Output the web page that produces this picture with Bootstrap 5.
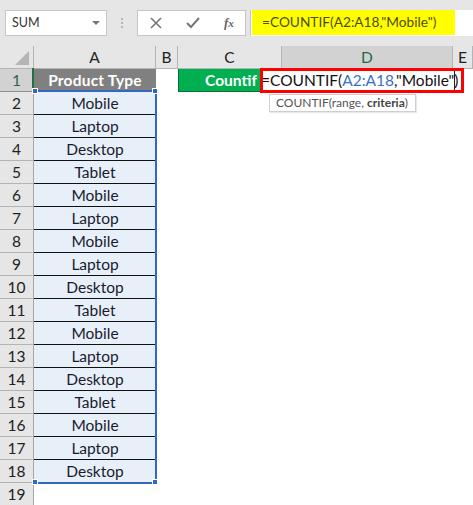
<!DOCTYPE html>
<html lang="en">
<head>
<meta charset="utf-8">
<title>COUNTIF</title>
<link href="https://cdn.jsdelivr.net/npm/bootstrap@5.3.0/dist/css/bootstrap.min.css" rel="stylesheet">
<style>
html,body{margin:0;height:505px;overflow:hidden;background:#fff;}
body{font-family:Lato,"Liberation Sans",sans-serif;color:#1a1a1a;}
.shell{width:473px;height:505px;position:relative;overflow:hidden;}
.fbar{height:46px;background:#e6e6e6;padding:10px 0 10px 5px;}
.namebox{width:102px;height:26px;background:#fff;border:1px solid #c6c6c6;padding:0 6px;font-size:12.5px;color:#333;}
.caret{width:0;height:0;border-left:4px solid transparent;border-right:4px solid transparent;border-top:4px solid #777;}
.gripper{width:20px;gap:2px;margin:0 5px;}
.gripper span{display:block;width:2px;height:2px;background:#b5b5b5;}
.fnbtns{width:109px;height:26px;background:#fff;border:1px solid #c6c6c6;margin-right:4px;flex:none;padding:0 11px 0 12px;}
.fnbtns svg{display:block;}
.fx{font-family:"Liberation Serif",serif;font-style:italic;font-weight:700;font-size:13px;color:#666;}
.fbox{flex:1;height:26px;background:#fff;padding-left:1px;border-left:1px solid #c6c6c6;}
.fhl{width:203px;height:25px;background:#ffff00;font-size:13.7px;color:#4d4d00;padding-left:10px;line-height:24px;white-space:nowrap;}
.sheet{display:grid;grid-template-columns:34px 122px 22px 82px 22px 171px 20px;grid-auto-rows:23px;}
.hd{background:#e6e6e6;border-right:1px solid #b4b4b4;border-bottom:1px solid #b4b4b4;font-size:15.5px;text-align:center;line-height:23px;color:#222;}
.hd.on{background:#d2d2d2;color:#1f6b47;border-bottom-color:#8f8f8f;}
.spanc{grid-column:span 2;}
.rowhd{grid-column:1;border-right:1px solid #a6a6a6;}
.corner{position:relative;}
.corner i{position:absolute;right:4px;bottom:3px;width:0;height:0;border-left:14px solid transparent;border-bottom:14px solid #b5b5b5;}
.dat{background:#e7eff9;border-bottom:1px solid #111;text-align:center;font-size:15.5px;line-height:22px;color:#1a1a2e;}
.dat.lastdat{border-bottom:0;}
.ph{background:#808080;color:#fff;font-weight:700;font-size:15.5px;text-align:center;line-height:22px;letter-spacing:.2px;}
.grn{grid-column:4;background:#00b050;color:#fff;font-weight:700;font-size:15.5px;line-height:22px;text-align:right;overflow:hidden;border-left:1px solid #0c6b35;border-bottom:1px solid #0c6b35;padding-right:3px;white-space:nowrap;}
.frm{grid-column:5 / span 3;font-size:15.5px;line-height:23px;padding-left:1px;white-space:nowrap;color:#111;}
.rf{color:#3a70c4;}
.sel{position:absolute;left:34px;top:90px;width:123px;height:394px;border:2px solid #3268c4;border-left:0;pointer-events:none;}
.hnd{position:absolute;width:4px;height:4px;background:#3268c4;border:1px solid #fff;box-sizing:content-box;}
.hnd.tr{left:152px;top:88px;}
.hnd.br{left:152px;top:479px;}
.hnd.tl{left:32px;top:88px;}
.hnd.bl{left:32px;top:479px;}
.redbox{position:absolute;left:260px;top:68px;width:204px;height:25px;border:3px solid #f00;pointer-events:none;}
.edge{position:absolute;left:454px;top:71px;width:1px;height:22px;background:#222;}
.tip{position:absolute;left:269px;top:94px;width:147px;height:18px;background:#fff;border:1px solid #cfcfcf;box-shadow:1px 1px 1px #e8e8e8;font-size:12px;line-height:16px;padding-left:6px;color:#555;white-space:nowrap;}
.tip b{color:#444;}
.activebar{position:absolute;left:32px;top:68px;width:2px;height:23px;background:#1f7246;}
</style>
</head>
<body>
<div class="shell">
  <div class="fbar d-flex align-items-center">
    <div class="namebox d-flex align-items-center justify-content-between flex-shrink-0"><span>SUM</span><span class="caret"></span></div>
    <div class="gripper d-flex flex-column align-items-center flex-shrink-0"><span></span><span></span><span></span></div>
    <div class="fnbtns d-flex align-items-center justify-content-between">
      <svg width="12" height="12" viewBox="0 0 12 12"><path d="M1 1l10 10M11 1L1 11" stroke="#777" stroke-width="1.6" fill="none"/></svg>
      <svg width="14" height="12" viewBox="0 0 14 12"><path d="M1 6l4 4 8-9" stroke="#777" stroke-width="2" fill="none"/></svg>
      <span class="fx">f<small>x</small></span>
    </div>
    <div class="fbox d-flex"><div class="fhl">=COUNTIF(A2:A18,"Mobile")</div></div>
  </div>
  <div class="sheet">
    <div class="hd corner"><i></i></div><div class="hd">A</div><div class="hd">B</div><div class="hd spanc">C</div><div class="hd on">D</div><div class="hd">E</div>
    <div class="hd on rowhd">1</div><div class="ph">Product Type</div><div class="grn">Countif</div><div class="frm">=COUNTIF(<span class="rf">A2:A18</span>,"Mobile")</div>
    <div class="hd rowhd">2</div><div class="dat">Mobile</div>
    <div class="hd rowhd">3</div><div class="dat">Laptop</div>
    <div class="hd rowhd">4</div><div class="dat">Desktop</div>
    <div class="hd rowhd">5</div><div class="dat">Tablet</div>
    <div class="hd rowhd">6</div><div class="dat">Mobile</div>
    <div class="hd rowhd">7</div><div class="dat">Laptop</div>
    <div class="hd rowhd">8</div><div class="dat">Mobile</div>
    <div class="hd rowhd">9</div><div class="dat">Laptop</div>
    <div class="hd rowhd">10</div><div class="dat">Desktop</div>
    <div class="hd rowhd">11</div><div class="dat">Tablet</div>
    <div class="hd rowhd">12</div><div class="dat">Mobile</div>
    <div class="hd rowhd">13</div><div class="dat">Laptop</div>
    <div class="hd rowhd">14</div><div class="dat">Desktop</div>
    <div class="hd rowhd">15</div><div class="dat">Tablet</div>
    <div class="hd rowhd">16</div><div class="dat">Mobile</div>
    <div class="hd rowhd">17</div><div class="dat">Laptop</div>
    <div class="hd rowhd">18</div><div class="dat lastdat">Desktop</div>
    <div class="hd rowhd">19</div>
  </div>
  <div class="activebar"></div>
  <div class="sel"></div>
  <div class="hnd tl"></div><div class="hnd tr"></div><div class="hnd bl"></div><div class="hnd br"></div>
  <div class="edge"></div>
  <div class="redbox"></div>
  <div class="tip">COUNTIF(range, <b>criteria</b>)</div>
</div>
<script src="https://cdn.jsdelivr.net/npm/bootstrap@5.3.0/dist/js/bootstrap.bundle.min.js"></script>
</body>
</html>
